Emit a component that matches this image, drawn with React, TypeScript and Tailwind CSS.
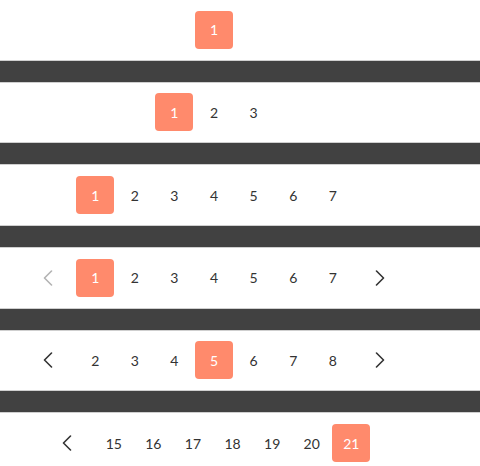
import React from "react";

type Item = number | "prev" | "next";

type Row = {
  items: Item[];
  active: number;
  prevDisabled?: boolean;
  shift: string;
};

const rows: Row[] = [
  { items: [1], active: 1, shift: "pr-[52px]" },
  { items: [1, 2, 3], active: 1, shift: "pr-[52px]" },
  { items: [1, 2, 3, 4, 5, 6, 7], active: 1, shift: "pr-[52px]" },
  { items: ["prev", 1, 2, 3, 4, 5, 6, 7, "next"], active: 1, prevDisabled: true, shift: "pr-[52px]" },
  { items: ["prev", 2, 3, 4, 5, 6, 7, 8, "next"], active: 5, shift: "pr-[52px]" },
  { items: ["prev", 15, 16, 17, 18, 19, 20, 21], active: 21, shift: "pr-[62px]" },
];

function Chevron({ dir, disabled }: { dir: "left" | "right"; disabled?: boolean }) {
  return (
    <svg width="10" height="16" viewBox="0 0 10 16" fill="none">
      <polyline
        points={dir === "left" ? "8.5,1 1.5,8 8.5,15" : "1.5,1 8.5,8 1.5,15"}
        stroke={disabled ? "#b3b3b3" : "#333333"}
        strokeWidth="1.6"
        strokeLinecap="round"
        strokeLinejoin="round"
      />
    </svg>
  );
}

function Pagination({ row }: { row: Row }) {
  return (
    <div className={`h-[59.67px] bg-white flex items-center justify-center ${row.shift}`}>
      <div className="flex items-center gap-[1.6px]">
        {row.items.map((it, i) => {
          if (it === "prev" || it === "next") {
            return (
              <div
                key={i}
                className={`w-[38px] h-[38px] flex items-center justify-center ${it === "prev" ? "mr-[7.5px]" : "ml-[7.5px]"}`}
              >
                <Chevron dir={it === "prev" ? "left" : "right"} disabled={it === "prev" && row.prevDisabled} />
              </div>
            );
          }
          const on = it === row.active;
          return (
            <div
              key={i}
              className={`w-[38px] h-[38px] rounded-[4px] flex items-center justify-center text-[14px] ${
                on ? "bg-[#ff8a6c] text-white" : "text-[#333333]"
              }`}
            >
              {it}
            </div>
          );
        })}
      </div>
    </div>
  );
}

export default function App() {
  return (
    <div className="w-[480px] h-[466px] overflow-hidden bg-white" style={{ fontFamily: "Lato, 'Open Sans', sans-serif" }}>
      {rows.map((r, i) => (
        <div key={i}>
          <Pagination row={r} />
          {i < rows.length - 1 && (
            <div className="h-[23px] bg-[#414141] border-y border-[#cfcfcf]" />
          )}
        </div>
      ))}
    </div>
  );
}
